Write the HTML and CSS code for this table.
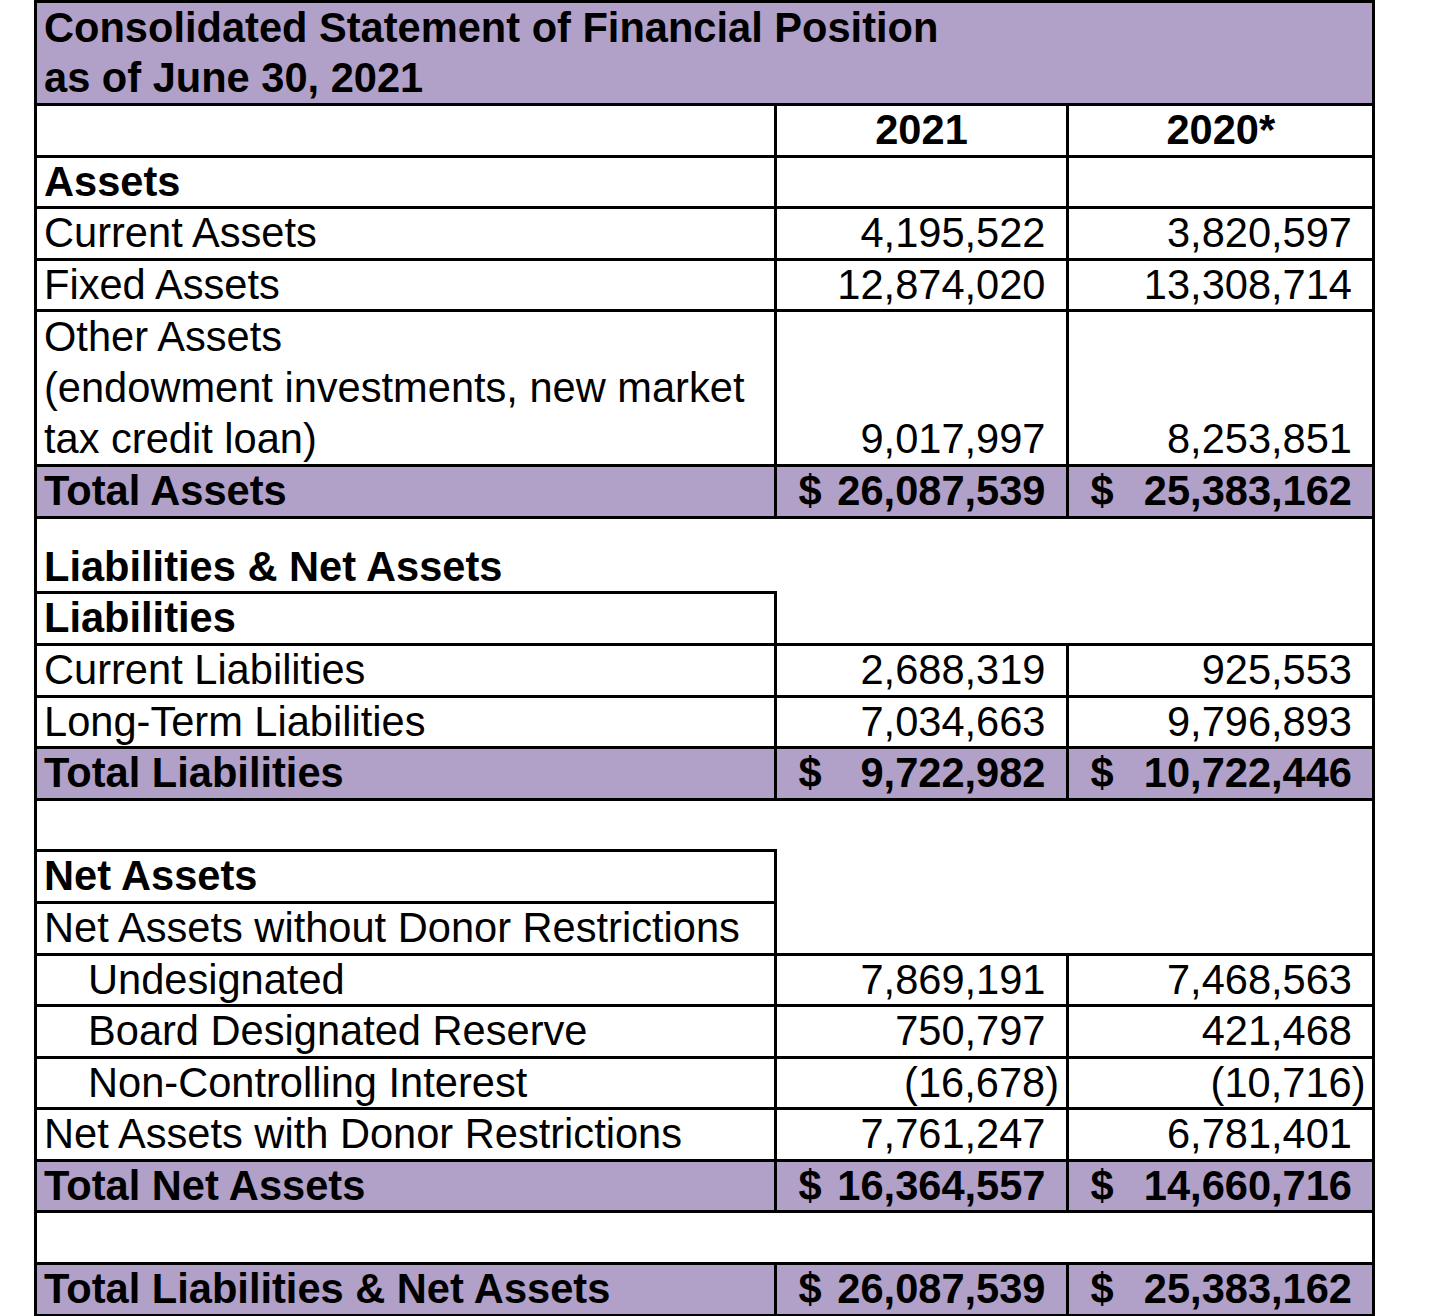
FILE: index.html
```html
<!DOCTYPE html>
<html lang="en">
<head>
<meta charset="utf-8">
<title>Consolidated Statement of Financial Position</title>
<link rel="stylesheet" href="styles.css">
</head>
<body>
<table class="sheet">
  <colgroup>
    <col class="col-label">
    <col class="col-y1">
    <col class="col-y2">
  </colgroup>
  <tr class="title-row">
    <td colspan="3" class="title">Consolidated Statement of Financial Position<br>as of June 30, 2021</td>
  </tr>
  <tr>
    <td class="b"></td>
    <td class="b hd">2021</td>
    <td class="b hd">2020*</td>
  </tr>
  <tr>
    <td class="b strong">Assets</td>
    <td class="b"></td>
    <td class="b"></td>
  </tr>
  <tr>
    <td class="b">Current Assets</td>
    <td class="b num">4,195,522</td>
    <td class="b num">3,820,597</td>
  </tr>
  <tr>
    <td class="b">Fixed Assets</td>
    <td class="b num">12,874,020</td>
    <td class="b num">13,308,714</td>
  </tr>
  <tr class="multi">
    <td class="b">Other Assets<br>(endowment investments, new market<br>tax credit loan)</td>
    <td class="b num">9,017,997</td>
    <td class="b num">8,253,851</td>
  </tr>
  <tr class="total">
    <td class="b strong">Total Assets</td>
    <td class="b acct"><div class="acct-in"><span>$</span><span>26,087,539</span></div></td>
    <td class="b acct"><div class="acct-in"><span>$</span><span>25,383,162</span></div></td>
  </tr>
  <tr class="short">
    <td colspan="3">&nbsp;</td>
  </tr>
  <tr>
    <td class="strong">Liabilities &amp; Net Assets</td>
    <td colspan="2" rowspan="2"></td>
  </tr>
  <tr>
    <td class="b strong">Liabilities</td>
  </tr>
  <tr>
    <td class="b">Current Liabilities</td>
    <td class="b num">2,688,319</td>
    <td class="b num">925,553</td>
  </tr>
  <tr>
    <td class="b">Long-Term Liabilities</td>
    <td class="b num">7,034,663</td>
    <td class="b num">9,796,893</td>
  </tr>
  <tr class="total">
    <td class="b strong">Total Liabilities</td>
    <td class="b acct"><div class="acct-in"><span>$</span><span>9,722,982</span></div></td>
    <td class="b acct"><div class="acct-in"><span>$</span><span>10,722,446</span></div></td>
  </tr>
  <tr>
    <td colspan="3">&nbsp;</td>
  </tr>
  <tr>
    <td class="b strong">Net Assets</td>
    <td colspan="2" rowspan="2"></td>
  </tr>
  <tr>
    <td class="b">Net Assets without Donor Restrictions</td>
  </tr>
  <tr>
    <td class="b ind">Undesignated</td>
    <td class="b num">7,869,191</td>
    <td class="b num">7,468,563</td>
  </tr>
  <tr>
    <td class="b ind">Board Designated Reserve</td>
    <td class="b num">750,797</td>
    <td class="b num">421,468</td>
  </tr>
  <tr>
    <td class="b ind">Non-Controlling Interest</td>
    <td class="b num neg">(16,678)</td>
    <td class="b num neg">(10,716)</td>
  </tr>
  <tr>
    <td class="b">Net Assets with Donor Restrictions</td>
    <td class="b num">7,761,247</td>
    <td class="b num">6,781,401</td>
  </tr>
  <tr class="total">
    <td class="b strong">Total Net Assets</td>
    <td class="b acct"><div class="acct-in"><span>$</span><span>16,364,557</span></div></td>
    <td class="b acct"><div class="acct-in"><span>$</span><span>14,660,716</span></div></td>
  </tr>
  <tr>
    <td colspan="3">&nbsp;</td>
  </tr>
  <tr class="total">
    <td class="b strong">Total Liabilities &amp; Net Assets</td>
    <td class="b acct"><div class="acct-in"><span>$</span><span>26,087,539</span></div></td>
    <td class="b acct"><div class="acct-in"><span>$</span><span>25,383,162</span></div></td>
  </tr>
</table>
</body>
</html>
```

FILE: styles.css
```css
html, body {
  margin: 0;
  padding: 0;
  background: #ffffff;
}

body {
  font-family: "Liberation Sans", Arial, sans-serif;
  font-size: 41.6px;
  color: #000000;
}

.sheet {
  border-collapse: collapse;
  table-layout: fixed;
  width: 1338px;
  margin-left: 34px;
  border: 3px solid #000000;
}

.col-label { width: 739.5px; }
.col-y1 { width: 292px; }
.col-y2 { width: 306.5px; }

.sheet td {
  padding: 0 6px 0 7px;
  line-height: 48.6px;
  vertical-align: bottom;
  white-space: nowrap;
  overflow: hidden;
}

.sheet td.b {
  border: 3px solid #000000;
}

.title {
  background: #b1a0c7;
  font-weight: bold;
}

.sheet .title-row td {
  line-height: 50px;
}

.sheet .multi td {
  line-height: 50.6px;
}

.sheet .short td {
  line-height: 24px;
}

.strong {
  font-weight: bold;
}

.hd {
  font-weight: bold;
  text-align: center;
}

.sheet td.ind {
  padding-left: 51px;
}

.sheet td.num {
  text-align: right;
  padding-right: 20px;
}

.sheet td.num.neg {
  padding-right: 6.5px;
}

.total td {
  background: #b1a0c7;
  font-weight: bold;
}

.sheet td.acct {
  padding: 0 20px 0 22px;
}

.acct-in {
  display: flex;
  justify-content: space-between;
}
```
